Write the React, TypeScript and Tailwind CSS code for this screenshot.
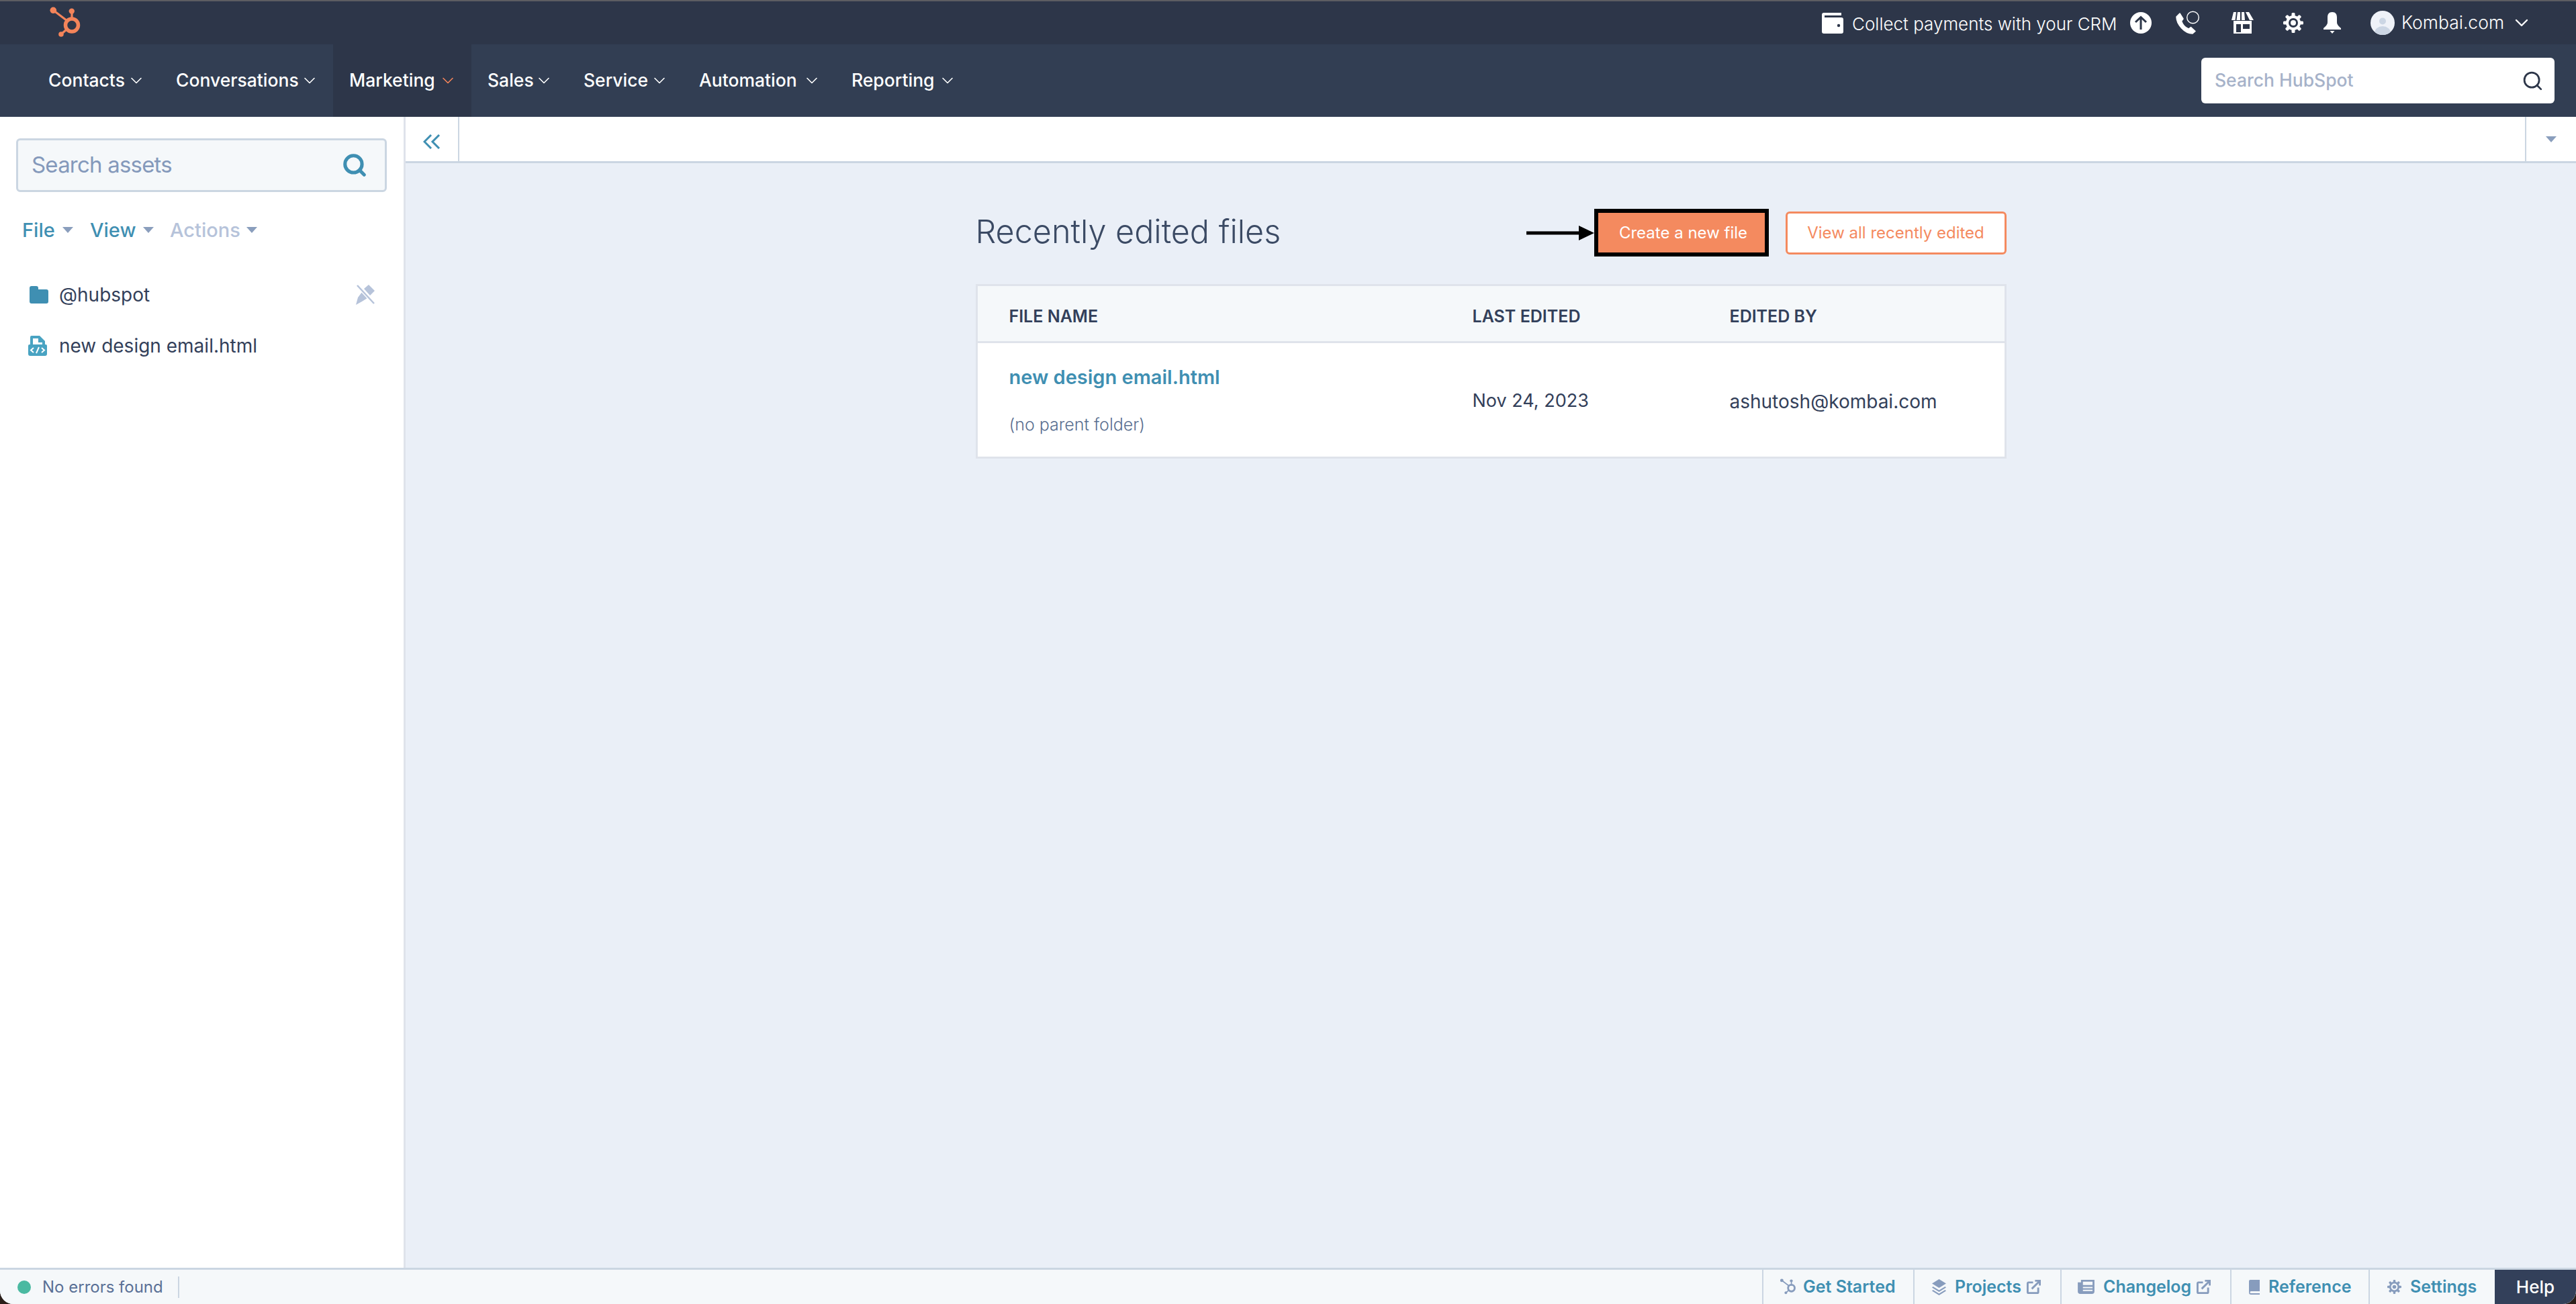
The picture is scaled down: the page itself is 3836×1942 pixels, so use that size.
import { ChevronDown, Search } from "lucide-react";

const navItems = [
  { label: "Contacts", w: "w-[114px]" },
  { label: "Conversations", w: "w-[182px]" },
  { label: "Marketing", w: "w-[130px]", active: true },
  { label: "Sales", w: "w-[67px]" },
  { label: "Service", w: "w-[96px]" },
  { label: "Automation", w: "w-[151px]" },
  { label: "Reporting", w: "w-[126px]" },
];

const Sprocket = (props: { className?: string; color: string }) => (
  <svg viewBox="0 0 100 66" className={props.className}>
    <g stroke={props.color} fill="none">
      <path d="M29 15 L50 31 M57 17 V30 M41 51 L49 44" strokeWidth="3.2" />
      <circle cx="57" cy="37.5" r="9.5" strokeWidth="5.5" />
    </g>
    <g fill={props.color}>
      <circle cx="29.3" cy="15.3" r="4.8" />
      <circle cx="56.8" cy="16.6" r="4.2" />
      <circle cx="41" cy="51" r="3.8" />
    </g>
  </svg>
);

const UploadIcon = () => (
  <svg viewBox="0 0 32 32" className="w-[32px] h-[32px]">
    <circle cx="16" cy="16" r="16" fill="#fff" />
    <path d="M16 26 V8 M8 15 L16 7.5 L24 15" stroke="#2d3649" strokeWidth="3" fill="none" />
  </svg>
);

const PhoneIcon = () => (
  <svg viewBox="0 0 38 36" className="w-[38px] h-[36px]">
    <path
      d="M2 9 L7 4 L12 12 L9.5 15.5 C11 20 15 25 20 27 L23.5 24.5 L30 30.5 L26 34 C14 34 2 20 2 9 Z"
      fill="#fff"
      stroke="#fff"
      strokeWidth="1.5"
      strokeLinejoin="round"
    />
    <circle cx="26.5" cy="10" r="8.8" fill="none" stroke="#fff" strokeWidth="1.4" />
  </svg>
);

const StoreIcon = () => (
  <svg viewBox="0 0 33 32" className="w-[33px] h-[32px]">
    <path d="M3 0 H7 L5.5 12 H0 Z M9 0 H13 L13 12 H7.5 Z M15 0 H19 L20 12 H15 Z M21 0 H26 L33 12 H27 Z" fill="#fff" />
    <path d="M3 13 H30 V32 H3 Z" fill="#fff" />
    <path d="M7 18 H14 V30 H7 Z M17 18 H27 V25 H17 Z" fill="#2d3649" />
  </svg>
);

const GearIcon = (props: { className?: string; color: string }) => (
  <svg viewBox="0 0 30 30" className={props.className}>
    {[0, 45, 90, 135, 180, 225, 270, 315].map((deg) => (
      <rect key={deg} x="12.5" y="0" width="5" height="7" rx="1.5" fill={props.color} transform={`rotate(${deg} 15 15)`} />
    ))}
    <circle cx="15" cy="15" r="9" fill="none" stroke={props.color} strokeWidth="4" />
    <circle cx="15" cy="15" r="4" fill={props.color} />
  </svg>
);

const BellIcon = () => (
  <svg viewBox="0 0 26 32" className="w-[26px] h-[32px]">
    <path d="M13 0 C8 0 6 3 6 8 V15 C6 19 3 21 0 24 V26 H26 V24 C23 21 20 19 20 15 V8 C20 3 18 0 13 0 Z" fill="#fff" />
    <path d="M9.5 28 H16.5 L13 32 Z" fill="#fff" />
  </svg>
);

const Avatar = () => (
  <svg viewBox="0 0 36 36" className="w-[36px] h-[36px]">
    <defs>
      <clipPath id="avatar-clip">
        <circle cx="18" cy="18" r="18" />
      </clipPath>
    </defs>
    <circle cx="18" cy="18" r="18" fill="#eff2f8" />
    <circle cx="18" cy="15.5" r="5" fill="#ccd6e4" />
    <ellipse cx="18" cy="33" rx="12" ry="10" fill="#ccd6e4" clipPath="url(#avatar-clip)" />
  </svg>
);

const Caret = (props: { color?: string; className?: string }) => (
  <svg viewBox="0 0 16 9" className={props.className ?? "w-[16px] h-[9px]"}>
    <path d="M0 0 H16 L8 9 Z" fill={props.color ?? "#8a9ebd"} />
  </svg>
);

const ExternalIcon = () => (
  <svg viewBox="0 0 22 22" className="w-[21px] h-[21px]" fill="none" stroke="#879cbd" strokeWidth="3">
    <path d="M10 4 H3 A1.5 1.5 0 0 0 1.5 5.5 V19 A1.5 1.5 0 0 0 3 20.5 H16.5 A1.5 1.5 0 0 0 18 19 V12" />
    <path d="M8 14 L20 2 M13 1.5 H20.5 V9" />
  </svg>
);

const LayersIcon = () => (
  <svg viewBox="0 0 21 24" className="w-[21px] h-[24px]" fill="#879cbd">
    <path d="M10.5 0 L21 6.5 L10.5 13 L0 6.5 Z" />
    <path d="M1.5 11 L10.5 16.5 L19.5 11 L21 12.5 L10.5 19 L0 12.5 Z" />
    <path d="M1.5 16 L10.5 21.5 L19.5 16 L21 17.5 L10.5 24 L0 17.5 Z" />
  </svg>
);

const NewsIcon = () => (
  <svg viewBox="0 0 26 22" className="w-[25px] h-[21px]">
    <path d="M0 4 H5 V0 H26 V18 A4 4 0 0 1 22 22 H4 A4 4 0 0 1 0 18 Z" fill="#879cbd" />
    <path d="M8 3 H23 V8 H8 Z M8 11 H23 V13 H8 Z M8 15.5 H23 V17.5 H8 Z" fill="#f5f8fa" />
  </svg>
);

const BookIcon = () => (
  <svg viewBox="0 0 16 22" className="w-[16px] h-[22px]">
    <path d="M2 0 H16 V17 H3 A1.5 1.5 0 0 0 3 20 H16 V22 H3 A3 3 0 0 1 0 19 V2 A2 2 0 0 1 2 0 Z" fill="#879cbd" />
  </svg>
);

const PinOffIcon = () => (
  <svg viewBox="0 0 28 30" className="w-[28px] h-[30px]">
    <path d="M19 0 L28 9 L21 16 L12 6 Z M9 11 L17 20 L9 25 L0 30 L3 19 Z" fill="#b6c3da" />
    <path d="M2 1 L27 28" stroke="#fff" strokeWidth="5" />
    <path d="M2 1 L27 28" stroke="#b6c3da" strokeWidth="2.5" />
  </svg>
);

const FolderIcon = () => (
  <svg viewBox="0 0 28 26" className="w-[28px] h-[26px]">
    <path d="M3 0 H10 A3 3 0 0 1 13 3 V5 H25 A3 3 0 0 1 28 8 V23 A3 3 0 0 1 25 26 H3 A3 3 0 0 1 0 23 V3 A3 3 0 0 1 3 0 Z" fill="#3f8fb2" />
  </svg>
);

const CodeFileIcon = () => (
  <svg viewBox="0 0 28 30" className="w-[28px] h-[30px]">
    <path d="M5 0 H17 L25 8 V13 H26 A2 2 0 0 1 28 15 V27 A3 3 0 0 1 25 30 H3 A3 3 0 0 1 0 27 V15 A2 2 0 0 1 2 13 H3 V2 A2 2 0 0 1 5 0 Z" fill="#49a3c2" />
    <path d="M7 4 H15 V10 H21 V13 H7 Z" fill="#fff" />
    <path d="M8 18 L4 21.5 L8 25 M20 18 L24 21.5 L20 25 M12 26 L16 17" fill="none" stroke="#fff" strokeWidth="2" />
  </svg>
);

const TopBar = () => (
  <div className="h-[66px] shrink-0 flex items-center bg-[#2d3649] border-t-2 border-[#5d5d62]">
    <Sprocket className="w-[100px] h-[66px] ml-[50px] -mt-[2px]" color="#f4845a" />
    <div className="ml-auto flex items-center text-white pr-[69px]">
      <svg viewBox="0 0 32 31" className="w-[32px] h-[31px] mr-[13px]">
        <path d="M3 0 H29 V4 H4 V7 H29 A3 3 0 0 1 32 10 V28 A3 3 0 0 1 29 31 H3 A3 3 0 0 1 0 28 V3 A3 3 0 0 1 3 0 Z" fill="#fff" />
        <circle cx="25" cy="19" r="2.2" fill="#2d3649" />
      </svg>
      <span className="text-[26px] font-light w-[396px] mt-[3px] whitespace-nowrap">Collect payments with your CRM</span>
      <div className="ml-[18px]"><UploadIcon /></div>
      <div className="ml-[35px]"><PhoneIcon /></div>
      <div className="ml-[46px]"><StoreIcon /></div>
      <GearIcon className="w-[30px] h-[30px] ml-[44px]" color="#fff" />
      <div className="ml-[30px]"><BellIcon /></div>
      <div className="ml-[44px]"><Avatar /></div>
      <span className="text-[26.5px] font-light ml-[10px] w-[153px] whitespace-nowrap">Kombai.com</span>
      <ChevronDown className="ml-[10px] w-[32px] h-[32px] -mr-[4px]" strokeWidth={1.8} />
    </div>
  </div>
);

const NavBar = () => (
  <div className="h-[108px] shrink-0 flex items-stretch bg-[#323e53] pl-[48px] pr-[32px]">
    {navItems.map((item) => (
      <div
        key={item.label}
        className={`flex items-center px-[24px] ${item.active ? "bg-[#2d3649]" : ""}`}
      >
        <span className={`text-[26.5px] font-medium text-white whitespace-nowrap ${item.w}`}>{item.label}</span>
        <ChevronDown
          className={`ml-[3px] -mr-[3px] w-[28px] h-[28px] ${item.active ? "text-[#f4845a]" : "text-white"}`}
          strokeWidth={1.4}
        />
      </div>
    ))}
    <div className="ml-auto self-center w-[526px] h-[68px] rounded-[6px] bg-white flex items-center justify-between pl-[20px] pr-[16px]">
      <span className="text-[26.5px] font-medium text-[#a6b2c9]">Search HubSpot</span>
      <Search className="w-[33px] h-[33px] text-[#2d3649]" strokeWidth={2} />
    </div>
  </div>
);

const Sidebar = () => (
  <div className="w-[604px] shrink-0 bg-white border-r-[3px] border-[#dfe3eb] pl-[24px] pr-[25px]">
    <div className="mt-[32px] h-[80px] rounded-[6px] border-[3px] border-[#cbd6e2] bg-[#f5f8fa] flex items-center justify-between pl-[20px] pr-[26px]">
      <span className="text-[33px] tracking-[-0.8px] text-[#8499bb]">Search assets</span>
      <Search className="w-[38px] h-[38px] text-[#3f8fb2]" strokeWidth={3.2} />
    </div>
    <div className="mt-[35px] flex items-center pl-[9px] text-[29px] font-medium text-[#3f8fb2]">
      <span className="w-[49px]">File</span>
      <Caret className="w-[16px] h-[9px] ml-[11px]" />
      <span className="ml-[25px] w-[67px]">View</span>
      <Caret className="w-[16px] h-[9px] ml-[12px]" />
      <span className="ml-[24px] w-[102px] text-[#b6c3da] whitespace-nowrap">Actions</span>
      <Caret className="w-[16px] h-[9px] ml-[12px]" />
    </div>
    <div className="mt-[58px] flex items-center h-[32px] pl-[20px] pr-[18px] text-[28px] text-[#33405a]">
      <FolderIcon />
      <span className="ml-[16px]">@hubspot</span>
      <div className="ml-auto"><PinOffIcon /></div>
    </div>
    <div className="mt-[44px] flex items-center h-[32px] pl-[18px] text-[28px] text-[#33405a]">
      <CodeFileIcon />
      <span className="ml-[18px] whitespace-nowrap">new design email.html</span>
    </div>
  </div>
);

const TabBar = () => (
  <div className="h-[69px] shrink-0 bg-white border-b-[3px] border-[#cbd6e2] flex items-stretch">
    <div className="w-[80px] border-r-[2px] border-[#cbd6e2] flex items-center pl-[26px]">
      <svg viewBox="0 0 26 22" className="w-[26px] h-[22px] mt-[8px]" fill="none" stroke="#3f8fb2" strokeWidth="3">
        <path d="M12 1 L2 11 L12 21 M24 1 L14 11 L24 21" />
      </svg>
    </div>
    <div className="flex-1" />
    <div className="w-[76px] border-l-[2px] border-[#cbd6e2] flex items-center justify-center">
      <Caret className="w-[16px] h-[9px]" />
    </div>
  </div>
);

const RecentFiles = () => (
  <div className="w-[1535px] mx-auto pt-[68px]">
    <div className="h-[71px] flex items-center">
      <h1 className="text-[48.5px] font-light text-[#3b4a64] -mt-[3px] whitespace-nowrap">Recently edited files</h1>
      <div className="ml-auto relative h-[71px] w-[260px] border-[6px] border-black bg-[#f48a5f] flex items-center justify-center pl-[6px] text-[24px] text-white whitespace-nowrap">
        Create a new file
        <svg viewBox="0 0 101 24" className="absolute left-[-107px] top-[18px] w-[101px] h-[24px]">
          <path d="M0 12 H82" stroke="#000" strokeWidth="5" />
          <path d="M78 1 L101 12 L78 23 Z" fill="#000" />
        </svg>
      </div>
      <div className="ml-[25px] h-[64px] w-[329px] rounded-[6px] border-[3px] border-[#f48a5f] bg-white flex items-center justify-center text-[24px] text-[#f48a5f] whitespace-nowrap">
        View all recently edited
      </div>
    </div>
    <div className="mt-[41px] border-[3px] border-[#dfe3eb]">
      <div className="h-[85px] pt-[10px] bg-[#f5f8fa] border-b-[3px] border-[#dfe3eb] grid grid-cols-[737px_383px_1fr] items-center text-[25px] font-semibold text-[#33405a] uppercase">
        <span className="pl-[47px]">File name</span>
        <span>Last edited</span>
        <span>Edited by</span>
      </div>
      <div className="h-[169px] bg-white grid grid-cols-[737px_383px_1fr] items-center text-[#33405a]">
        <div className="pl-[47px] flex flex-col">
          <span className="text-[29px] font-semibold text-[#3f8fb2]">new design email.html</span>
          <span className="mt-[31px] text-[25px] font-light text-[#5a6f90]">(no parent folder)</span>
        </div>
        <span className="text-[27px] mt-[4px]">Nov 24, 2023</span>
        <span className="text-[28px] mt-[4px]">ashutosh@kombai.com</span>
      </div>
    </div>
  </div>
);

const StatusLink = (props: { icon: React.ReactNode; label: string; external?: boolean; className: string }) => (
  <div className={`h-full flex items-center border-l-[2px] border-[#cbd6e2] ${props.className}`}>
    {props.icon}
    <span className="ml-[13px] text-[25px] font-semibold text-[#3f8fb2] whitespace-nowrap">{props.label}</span>
    {props.external && (
      <div className="ml-[8px]">
        <ExternalIcon />
      </div>
    )}
  </div>
);

const StatusBar = () => (
  <div className="h-[54px] shrink-0 bg-[#f5f8fa] border-t-[3px] border-[#cbd6e2] flex items-stretch">
    <div className="flex items-center pl-[26px]">
      <div className="w-[20px] h-[20px] rounded-full bg-[#4ab9a1]" />
      <span className="ml-[17px] w-[177px] text-[24px] text-[#5a7096] whitespace-nowrap">No errors found</span>
      <div className="ml-[25px] w-[2px] h-[32px] bg-[#cbd6e2]" />
    </div>
    <div className="ml-auto flex items-stretch">
      <StatusLink
        className="w-[225px] pl-[24px]"
        label="Get Started"
        icon={<Sprocket className="w-[52px] h-[34px] -ml-[12px] -mr-[18px] -mt-[2px] shrink-0" color="#879cbd" />}
      />
      <StatusLink className="w-[219px] pl-[26px]" label="Projects" external icon={<LayersIcon />} />
      <StatusLink className="w-[253px] pl-[24px]" label="Changelog" external icon={<NewsIcon />} />
      <StatusLink className="w-[206px] pl-[26px]" label="Reference" icon={<BookIcon />} />
      <StatusLink
        className="w-[188px] pl-[26px]"
        label="Settings"
        icon={<GearIcon className="w-[21px] h-[21px]" color="#879cbd" />}
      />
      <div className="w-[121px] bg-[#33405a] flex items-center justify-center text-[26px] font-medium text-white">Help</div>
    </div>
  </div>
);

export default function App() {
  return (
    <div className="w-[3836px] h-[1942px] bg-[#2b1f1a] [font-family:Inter,sans-serif] overflow-hidden">
      <div className="w-full h-full rounded-b-[20px] overflow-hidden flex flex-col bg-[#eaeff7]">
        <TopBar />
        <NavBar />
        <div className="flex-1 min-h-0 flex">
          <Sidebar />
          <div className="flex-1 min-w-0 flex flex-col">
            <TabBar />
            <RecentFiles />
          </div>
        </div>
        <StatusBar />
      </div>
    </div>
  );
}
